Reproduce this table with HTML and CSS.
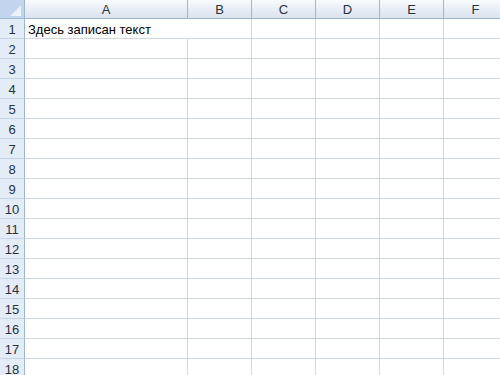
FILE: index.html
```html
<!DOCTYPE html>
<html lang="ru">
<head>
<meta charset="utf-8">
<title>Книга1</title>
<link rel="stylesheet" href="styles.css">
</head>
<body>
<div class="sheet">
  <div class="corner"><span class="corner-tri"></span></div>
  <div class="col-head">A</div>
  <div class="col-head">B</div>
  <div class="col-head">C</div>
  <div class="col-head">D</div>
  <div class="col-head">E</div>
  <div class="col-head">F</div>

  <div class="row-head">1</div>
  <div class="cell cell-text spill">Здесь записан текст</div>
  <div class="cell"></div><div class="cell"></div><div class="cell"></div><div class="cell"></div><div class="cell"></div>

  <div class="row-head">2</div>
  <div class="cell"></div><div class="cell"></div><div class="cell"></div><div class="cell"></div><div class="cell"></div><div class="cell"></div>
  <div class="row-head">3</div>
  <div class="cell"></div><div class="cell"></div><div class="cell"></div><div class="cell"></div><div class="cell"></div><div class="cell"></div>
  <div class="row-head">4</div>
  <div class="cell"></div><div class="cell"></div><div class="cell"></div><div class="cell"></div><div class="cell"></div><div class="cell"></div>
  <div class="row-head">5</div>
  <div class="cell"></div><div class="cell"></div><div class="cell"></div><div class="cell"></div><div class="cell"></div><div class="cell"></div>
  <div class="row-head">6</div>
  <div class="cell"></div><div class="cell"></div><div class="cell"></div><div class="cell"></div><div class="cell"></div><div class="cell"></div>
  <div class="row-head">7</div>
  <div class="cell"></div><div class="cell"></div><div class="cell"></div><div class="cell"></div><div class="cell"></div><div class="cell"></div>
  <div class="row-head">8</div>
  <div class="cell"></div><div class="cell"></div><div class="cell"></div><div class="cell"></div><div class="cell"></div><div class="cell"></div>
  <div class="row-head">9</div>
  <div class="cell"></div><div class="cell"></div><div class="cell"></div><div class="cell"></div><div class="cell"></div><div class="cell"></div>
  <div class="row-head">10</div>
  <div class="cell"></div><div class="cell"></div><div class="cell"></div><div class="cell"></div><div class="cell"></div><div class="cell"></div>
  <div class="row-head">11</div>
  <div class="cell"></div><div class="cell"></div><div class="cell"></div><div class="cell"></div><div class="cell"></div><div class="cell"></div>
  <div class="row-head">12</div>
  <div class="cell"></div><div class="cell"></div><div class="cell"></div><div class="cell"></div><div class="cell"></div><div class="cell"></div>
  <div class="row-head">13</div>
  <div class="cell"></div><div class="cell"></div><div class="cell"></div><div class="cell"></div><div class="cell"></div><div class="cell"></div>
  <div class="row-head">14</div>
  <div class="cell"></div><div class="cell"></div><div class="cell"></div><div class="cell"></div><div class="cell"></div><div class="cell"></div>
  <div class="row-head">15</div>
  <div class="cell"></div><div class="cell"></div><div class="cell"></div><div class="cell"></div><div class="cell"></div><div class="cell"></div>
  <div class="row-head">16</div>
  <div class="cell"></div><div class="cell"></div><div class="cell"></div><div class="cell"></div><div class="cell"></div><div class="cell"></div>
  <div class="row-head">17</div>
  <div class="cell"></div><div class="cell"></div><div class="cell"></div><div class="cell"></div><div class="cell"></div><div class="cell"></div>
  <div class="row-head">18</div>
  <div class="cell"></div><div class="cell"></div><div class="cell"></div><div class="cell"></div><div class="cell"></div><div class="cell"></div>
</div>
</body>
</html>
```
FILE: styles.css
```css
html, body {
  margin: 0;
  padding: 0;
  background: #ffffff;
  overflow: hidden;
}

.sheet {
  display: grid;
  grid-template-columns: 25px 163px repeat(5, 64px);
  grid-template-rows: 19px;
  grid-auto-rows: 20px;
  font-family: "Liberation Sans", Arial, sans-serif;
  font-size: 13px;
  color: #1f2a36;
}

.sheet > div {
  box-sizing: border-box;
}

/* top-left select-all box */
.corner {
  position: relative;
  background: #c3d5ee;
  border-right: 1px solid #9eb6ce;
  border-bottom: 1px solid #9eb6ce;
}

.corner-tri {
  position: absolute;
  right: 3px;
  bottom: 2px;
  width: 11px;
  height: 11px;
  background: linear-gradient(135deg, #d7e3f4 0%, #f4f8fd 100%);
  clip-path: polygon(100% 0, 100% 100%, 0 100%);
}

/* column letters */
.col-head {
  background: linear-gradient(to bottom, #f9fbfd 0%, #eaeff7 45%, #dbe3ef 100%);
  border-right: 1px solid #9eb6ce;
  border-bottom: 1px solid #9eb6ce;
  display: flex;
  align-items: center;
  justify-content: center;
  padding-top: 1px;
  color: #27323f;
}

/* row numbers */
.row-head {
  background: #e4ecf7;
  border-right: 1px solid #9eb6ce;
  border-bottom: 1px solid #c5d3e5;
  display: flex;
  align-items: center;
  justify-content: center;
  padding-top: 2px;
  color: #27323f;
}

.cell {
  border-right: 1px solid #d0d7e5;
  border-bottom: 1px solid #d0d7e5;
}

.cell-text {
  display: flex;
  align-items: center;
  padding: 2px 0 0 3px;
  white-space: nowrap;
  color: #000000;
}

.spill {
  border-right-color: #ffffff;
}
```
